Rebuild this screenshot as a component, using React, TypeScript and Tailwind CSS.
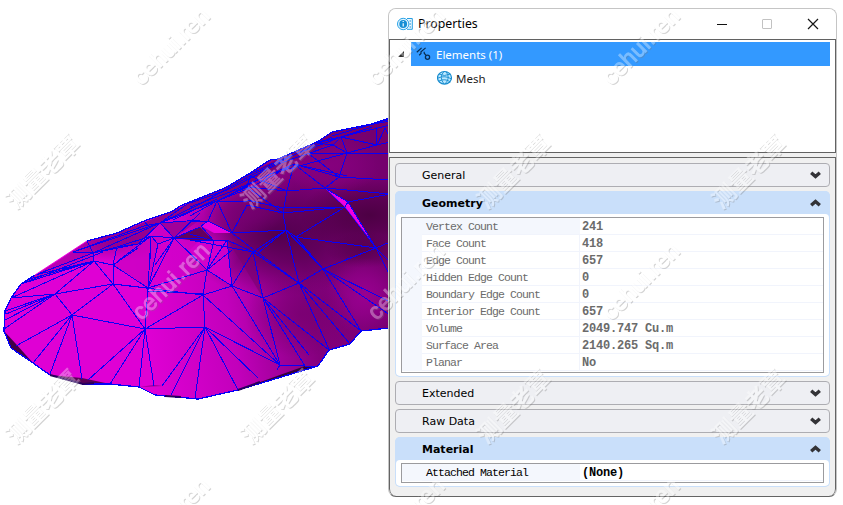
import React from "react";

const OUTLINE =
  "4,331 5,320 5,311 11,298 21,284 35,275 58,260 87,241 117,233 144,221 173,211 180,206 200,198 227,187 250,173 270,160 278,159 317,142 332,132 372,124 390,118 390,328 361,331 350,344 329,350 318,366 238,390 198,399 155,395 139,387 110,384 83,384 50,375 33,363 11,348";

const EDGES =
  "M55,294L113,284M55,294L72,315M55,294L94,261M55,294L11,298M55,294L5,311M55,294L5,320M55,294L4,329M55,294L6,314M72,315L113,284M72,315L145,329M72,315L82,379M72,315L50,374M72,315L33,363M72,315L16,346" +
  "M94,261L113,284M94,261L113,265M113,265L113,284M113,284L145,329M113,284L148,288M113,284L203,295M113,265L148,288M113,265L117,247M113,265L138,248M148,288L145,329M148,288L151,236M148,290L158,244M148,288L174,238M148,288L207,270M148,291L203,294" +
  "M145,329L203,295M145,329L205,327M145,329L139,387M145,329L154,386M145,329L88,380M145,329L110,384M205,327L162,386M205,327L171,395M205,327L195,398M205,327L280,365M205,327L238,390M205,327L258,378M205,327L203,295" +
  "M203,295L232,286M203,295L280,365M203,295L207,270M207,270L232,286M207,270L174,238M207,270L227,240M207,270L214,241M207,270L232,250M232,286L253,252M232,286L227,240M232,286L263,298M232,286L280,365" +
  "M253,252L263,298M253,252L299,283M250,247L299,283M263,298L299,283M263,298L280,365M263,298L305,366M263,298L309,355M263,298L329,350M299,283L323,269M299,283L286,230M299,283L329,349M299,283L350,344M299,283L361,331" +
  "M323,269L376,248M323,269L286,230M323,269L296,237M323,269L361,331M323,269L390,302M323,269L390,315M376,248L390,276M280,365L305,366M305,366L318,366M280,365L277,370" +
  "M94,261L21,284M94,261L35,275M94,261L26,280M103,252L21,284M93,253L35,275M94,261L11,298M93,253L87,241M93,253L94,261M73,252L93,253M93,253L138,244M93,253L160,223M73,252L160,223M93,253L117,247M117,247L138,244M117,247L151,236M138,244L151,236M138,244L160,223M73,252L144,226L160,223" +
  "M144,221L150,228M160,223L174,238M151,236L174,238M151,236L158,244M158,244L174,238M151,236L118,261M151,236L150,260M174,238L155,265M174,238L200,239M174,238L200,227M174,238L200,213M160,223L200,220M160,223L200,204M160,223L177,211M160,223L217,201M160,223L190,202M173,220L217,199" +
  "M190,203L227,190L278,164L333,145M190,207L230,192L294,164M190,211L217,201L270,174L347,153M190,202L278,161L341,137M200,204L250,176L332,137M217,201L250,188L294,164" +
  "M232,233L217,201M232,233L208,221M232,233L247,205M232,233L286,230M232,233L258,253M227,240L253,252M190,240L253,252M190,240L227,240M217,201L208,221M217,201L190,216M217,201L247,202M190,221L208,221M208,221L201,226L214,241M190,234L214,241M217,201L247,187L287,191M247,187L283,213M247,205L283,213M247,187L250,176M250,176L287,191M250,188L294,164" +
  "M283,213L287,191M283,213L286,230M283,213L345,207M283,208L345,207M247,200L283,208M287,191L294,164M287,191L325,188M294,164L325,188M294,164L339,177M294,164L347,176M339,177L347,153M339,177L309,154M339,177L390,180M339,177L325,188M325,188L390,194M347,153L341,137M347,153L333,145M347,153L310,153M347,153L390,153M347,153L377,145M341,137L377,145M341,137L317,143M341,137L390,125M341,137L333,145M333,145L317,143M377,145L385,128M377,145L376,127M377,145L390,142M385,128L390,138M332,132L390,121M332,136L390,119M317,142L341,137L372,127" +
  "M325,188L348,202M325,188L345,207M348,202L345,207M348,202L390,194M345,207L296,237M345,207L376,248M348,202L376,248M286,230L296,237M286,230L258,253M286,230L315,260M296,237L315,260M296,237L376,248M376,248L390,242M376,248L390,262M376,248L345,260M253,252L286,230";

function Terrain() {
  const shades: [number, number, number, number, string, number][] = [
    [278, 235, 100, 62, "#4b0047", 0.9],
    [370, 215, 70, 38, "#48003f", 0.9],
    [332, 165, 50, 28, "#87007f", 0.8],
    [245, 210, 42, 25, "#760071", 0.8],
    [364, 250, 38, 18, "#510048", 0.8],
    [365, 296, 40, 38, "#a3009a", 0.75],
    [300, 315, 55, 43, "#74006c", 0.7],
    [190, 251, 50, 30, "#d200cb", 0.8],
    [112, 244, 50, 18, "#96008f", 0.65],
  ];
  return (
    <svg width="388" height="505" viewBox="0 0 388 505" className="block shrink-0" aria-hidden="true">
      <defs>
        <clipPath id="land"><polygon points={OUTLINE} /></clipPath>
        <linearGradient id="base" x1="0" x2="389" y1="300" y2="240" gradientUnits="userSpaceOnUse">
          <stop offset="0.35" stopColor="#df00d4" />
          <stop offset="0.57" stopColor="#c200bb" />
          <stop offset="0.78" stopColor="#84007d" />
          <stop offset="1" stopColor="#75006e" />
        </linearGradient>
        {shades.map((s, i) => (
          <radialGradient id={`shade${i}`} key={i}>
            <stop offset="0" stopColor={s[4]} stopOpacity={s[5]} />
            <stop offset="0.45" stopColor={s[4]} stopOpacity={s[5] * 0.65} />
            <stop offset="1" stopColor={s[4]} stopOpacity="0" />
          </radialGradient>
        ))}
        <linearGradient id="ridge" x1="58" y1="245" x2="250" y2="190" gradientUnits="userSpaceOnUse">
          <stop stopColor="#bd00b4" /><stop offset="0.25" stopColor="#8e0087" /><stop offset="1" stopColor="#760070" />
        </linearGradient>
      </defs>
      <g clipPath="url(#land)">
        <polygon points={OUTLINE} fill="url(#base)" />
        {shades.map((s, i) => <ellipse key={i} cx={s[0]} cy={s[1]} rx={s[2]} ry={s[3]} fill={`url(#shade${i})`} />)}
        <polygon points="21,284 87,241 117,233 173,211 250,173 332,132 390,118 390,125 341,137 278,168 217,201 160,223 138,244 93,253" fill="url(#ridge)" opacity="0.82" />
        <polygon points="21,284 94,261 93,253 73,252" fill="#b300aa" opacity="0.6" />
        <polygon points="160,223 151,236 138,244 113,265 148,288 158,244 174,238" fill="#c900c1" opacity="0.7" />
        <polygon points="160,223 200,220 174,238" fill="#a1009a" />
        <polygon points="174,238 200,227 214,241 190,240" fill="#64005e" />
        <polygon points="201,226 208,221 232,233 214,233" fill="#e800df" />
        <polygon points="227,240 253,252 263,298 240,260" fill="#790072" opacity="0.6" />
        <polygon points="200,240 227,240 232,286 207,270 190,250" fill="#d600ce" opacity="0.85" />
        <polygon points="4,331 16,344 33,363 11,348" fill="#410044" />
        <polygon points="50,375 82,378 110,384 83,384" fill="#5a0057" />
        <polygon points="139,387 154,385 163,386" fill="#970091" />
        <polygon points="238,390 305,366 318,366" fill="#35003b" />
        <path d={EDGES} fill="none" stroke="#0800f7" strokeWidth="1" shapeRendering="crispEdges" />
        <polygon points="325,188 348,202 355,213 373,243 345,207" fill="#ef00e2" />
        <path d="M325,188L348,202L376,248M345,207L348,202" fill="none" stroke="#0800f7" shapeRendering="crispEdges" />
      </g>
      <path d="M35,275L21,284L11,298L5,311L4,331L11,348L33,363L50,375L83,384L110,384L139,387L155,395L198,399L238,390L318,366L329,350L350,344L361,331L389,328M87,241L117,233L144,221L173,211L180,206L200,198L227,187L250,173L270,160L278,159L317,142L332,132L372,124L389,118" fill="none" stroke="#0500fa" strokeWidth="1.3" shapeRendering="crispEdges" />
      <path d="M35,275L87,241" stroke="#ed00df" fill="none" />
      <path d="M50,375L83,384L94,383M165,396L181,397M238,390L260,382" stroke="#29005b" strokeWidth="2" fill="none" />
    </svg>
  );
}

function Chevron({ up = false }: { up?: boolean }) {
  return (
    <svg width="11" height="8" viewBox="0 0 11 8" className={up ? "rotate-180" : ""}>
      <path d="M1.2 1.7L5.5 5.5L9.8 1.7" fill="none" stroke="#333337" strokeWidth="3.4" />
    </svg>
  );
}

function Header({ title, open = false }: { title: string; open?: boolean }) {
  return (
    <div className={open
      ? "flex h-[23px] items-center justify-between rounded-t-[4px] bg-[#c9dffa] pr-[9px] pl-[27px] text-[11px] font-bold"
      : "flex h-6 shrink-0 items-center justify-between rounded-[4px] border border-[#adadb2] bg-[#eeeff3] pr-2 pl-[26px] text-[11px]"}>
      <span className={open ? "pt-[3px]" : "pt-[2px]"}>{title}</span>
      <Chevron up={open} />
    </div>
  );
}

const rows = [
  ["Vertex Count", "241"], ["Face Count", "418"], ["Edge Count", "657"],
  ["Hidden Edge Count", "0"], ["Boundary Edge Count", "0"], ["Interior Edge Count", "657"],
  ["Volume", "2049.747 Cu.m"], ["Surface Area", "2140.265 Sq.m"], ["Planar", "No"],
];

function DataRow({ label, value, selected = false }: { label: string; value: string; selected?: boolean }) {
  return (
    <div className="flex h-[17px] font-['Liberation_Mono',monospace] leading-[16px] whitespace-pre">
      <div className="w-[20px] shrink-0 bg-[#f4f7fd]" />
      <div className={selected ? "w-[158px] border-b border-[#f1f4fc] bg-[#f4f7fd] pl-1" : "w-[158px] border-r border-b border-[#f1f4fc] pl-1"}>
        <span className="inline-block text-[11.5px] tracking-[-0.9px]">{label}</span>
      </div>
      <div className="flex-1 border-b border-[#f1f4fc] pl-[2px] text-[12px] leading-[18px] font-bold tracking-[-0.2px]">{value}</div>
    </div>
  );
}

function PropertiesIcon() {
  return (
    <svg width="16" height="14" viewBox="0 0 16 14" className="shrink-0">
      <path d="M10 1.5h5.3v10.8H10" fill="#edf8ff" stroke="#299ee0" />
      <path d="M12.5 4h1.5M12.5 7h1.5M12.5 10h1.5" stroke="#168fd5" />
      <circle cx="6.2" cy="7" r="5.7" fill="#e2f5ff" stroke="#2aa3e7" />
      <circle cx="6.2" cy="7" r="3.9" fill="#168fd5" />
      <path d="M6.2 6.3V9.5M6.2 4v1" stroke="white" strokeWidth="1.2" />
    </svg>
  );
}

function PropertiesWindow() {
  return (
    <section className="my-2 flex h-[489px] w-[449px] shrink-0 flex-col overflow-hidden rounded-[8px] border border-[#c5c5c5] border-b-[#646464] bg-[#f0f0f0] font-['DejaVu_Sans',sans-serif] text-black">
      <div className="flex h-[30px] shrink-0 items-center bg-white pl-2 font-['Noto_Sans',sans-serif] text-[12.3px]">
        <PropertiesIcon />
        <span className="ml-[5px]">Properties</span>
        <svg width="102" height="12" viewBox="0 0 102 12" className="mr-[17px] ml-auto">
          <path d="M0 6.5h10" stroke="#111" />
          <rect x="45.5" y="1.5" width="9" height="9" rx=".5" fill="none" stroke="#c2c2c2" />
          <path d="M91 1L101 11M101 1L91 11" stroke="#171717" strokeWidth="1.2" />
        </svg>
      </div>
      <div className="h-[114px] shrink-0 border border-[#626262] bg-white pt-[2px] font-['Noto_Sans',sans-serif] text-[11.5px]">
        <div className="flex h-6">
          <div className="flex w-[21px] items-center justify-center">
            <svg width="6" height="6" viewBox="0 0 6 6"><path d="M6 0v6H0z" fill="#303030" /></svg>
          </div>
          <div className="mr-[5px] flex flex-1 items-center bg-[#3399ff] pl-[5px] text-white">
            <svg width="16" height="16" viewBox="0 0 16 16">
              <path d="M.8 6.2L5.6 1.9M3.2 9.2L5 7.5V5.8L9.6 1.9M8.2 5.8V7.2L10 9.3" fill="none" stroke="#082c50" strokeWidth="1.2" />
              <circle cx="11.5" cy="11.2" r="2.1" fill="none" stroke="#082c50" strokeWidth="1.3" />
            </svg>
            <span className="ml-1 pt-px">Elements (1)</span>
          </div>
        </div>
        <div className="flex h-6 items-center pl-[47px]">
          <svg width="16" height="16" viewBox="0 0 16 16">
            <ellipse cx="7.5" cy="7.8" rx="7" ry="6.3" fill="#bce8ff" stroke="#168bce" strokeWidth="1.2" />
            <path d="M2 4Q7 7 13.5 4M1 8Q8 5 14.5 9M2 11Q8 8 13.5 12M7 1.5Q1.5 7 7 14M9 1.5Q14 8 8 14" fill="none" stroke="#168bce" strokeWidth="0.9" />
          </svg>
          <span className="ml-[3px] pt-px text-[#222]">Mesh</span>
        </div>
      </div>
      <div className="h-1 shrink-0" />
      <div className="flex min-h-0 flex-1 flex-col gap-1 rounded-b-[7px] border-x border-t border-[#646464] px-[5px] pt-[5px]">
        <Header title="General" />
        <section className="h-[186px] shrink-0 overflow-hidden rounded-[5px] border-b border-[#c9dffa] bg-[#c9dffa]">
          <Header title="Geometry" open />
          <div className="mx-px h-[162px] rounded-[4px] bg-white px-[5px] pt-[3px]">
            <div className="h-[156px] border border-[#9b9b9e] text-[#6b6b6b]">
              {rows.map(([label, value], i) => <DataRow key={label} label={label} value={value} selected={i === 0} />)}
            </div>
          </div>
        </section>
        <Header title="Extended" />
        <Header title="Raw Data" />
        <section className="h-[50px] shrink-0 overflow-hidden rounded-[5px] border-b border-[#c9dffa] bg-[#c9dffa]">
          <Header title="Material" open />
          <div className="mx-px h-[26px] rounded-[4px] bg-white px-[5px] pt-[3px]">
            <div className="h-5 overflow-hidden border border-[#9b9b9e] text-black">
              <DataRow label="Attached Material" value="(None)" selected />
            </div>
          </div>
        </section>
      </div>
    </section>
  );
}

function Watermarks() {
  const latinX = [172, 407, 642, 878];
  const chineseX = [44, 279, 515, 750];
  return (
    <svg width="843" height="505" viewBox="0 0 843 505" className="pointer-events-none absolute inset-0" aria-hidden="true">
      <defs>
        <filter id="markShadow" x="-20%" y="-40%" width="140%" height="180%">
          <feOffset in="SourceAlpha" dx="1" dy="1" result="offset" />
          <feComposite in="offset" in2="SourceAlpha" operator="out" result="edge" />
          <feFlood floodColor="#777777" floodOpacity="0.32" />
          <feComposite in2="edge" operator="in" result="shade" />
          <feComponentTransfer in="SourceGraphic" result="letters"><feFuncA type="linear" slope="0.35" /></feComponentTransfer>
          <feMerge><feMergeNode in="shade" /><feMergeNode in="letters" /></feMerge>
        </filter>
      </defs>
      {[47, 282, 517].flatMap((y) => latinX.map((x) => (
        <g key={`${x}-${y}`} filter="url(#markShadow)"><text transform={`translate(${x} ${y}) rotate(-45)`} textAnchor="middle" dominantBaseline="middle" className="fill-white stroke-white stroke-[0.8px] font-['Liberation_Sans',sans-serif] text-[23px] tracking-[0.4px]">cehui.ren</text></g>
      )))}
      {[173, 408].flatMap((y) => chineseX.map((x) => (
        <g key={`${x}-${y}`} filter="url(#markShadow)"><text transform={`translate(${x} ${y}) rotate(-45)`} textAnchor="middle" dominantBaseline="middle" className="fill-white font-['Noto_Sans_CJK_SC',sans-serif] text-[23px] font-bold">测量老覃</text></g>
      )))}
    </svg>
  );
}

export default function App() {
  return (
    <main className="relative flex h-[505px] w-[843px] overflow-hidden bg-white">
      <Terrain />
      <PropertiesWindow />
      <Watermarks />
    </main>
  );
}
